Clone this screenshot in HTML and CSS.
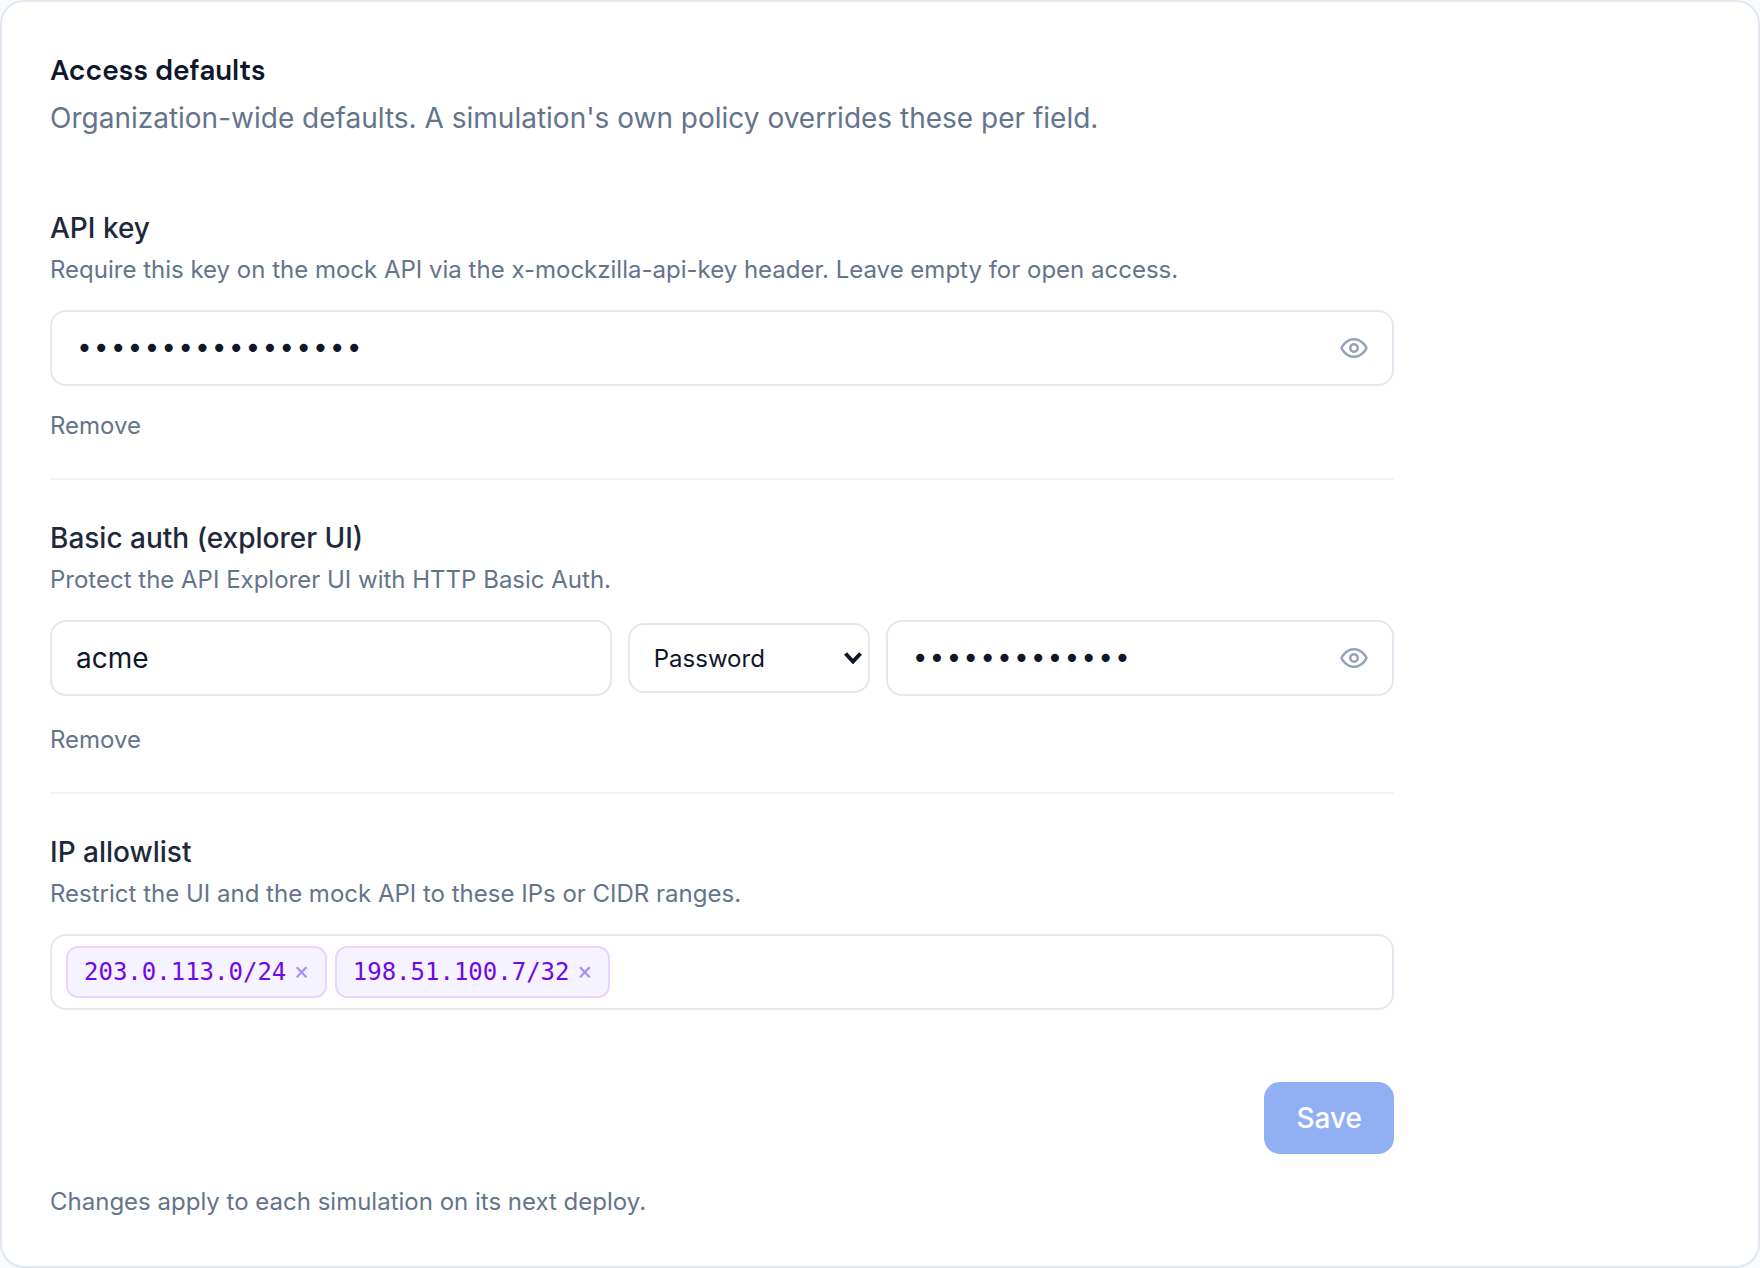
FILE: index.html
```html
<!DOCTYPE html>
<html lang="en">
<head>
    <meta charset="UTF-8">
    <meta name="viewport" content="width=device-width, initial-scale=1.0">
    <title>Access defaults</title>
    <link rel="stylesheet" href="styles.css">
</head>
<body>
    <main class="card">
        <header class="card-header">
            <h2>Access defaults</h2>
            <p>Organization-wide defaults. A simulation's own policy overrides these per field.</p>
        </header>

        <form id="accessForm" class="access-form">
            <section class="field">
                <label class="field-label" for="apiKey">API key</label>
                <p class="field-help">Require this key on the mock API via the x-mockzilla-api-key header. Leave empty for open access.</p>
                <div class="secret">
                    <input type="password" id="apiKey" name="apiKey" value="mk_live_4f9a27c1e" autocomplete="off">
                    <button type="button" class="reveal" aria-label="Show API key">
                        <svg viewBox="0 0 24 24"><path d="M2 12s3-7 10-7 10 7 10 7-3 7-10 7-10-7-10-7Z"/><circle cx="12" cy="12" r="3"/></svg>
                    </button>
                </div>
                <button type="button" class="remove">Remove</button>
            </section>

            <section class="field">
                <label class="field-label" for="authUser">Basic auth (explorer UI)</label>
                <p class="field-help">Protect the API Explorer UI with HTTP Basic Auth.</p>
                <div class="auth-row">
                    <input type="text" id="authUser" name="authUser" value="acme" autocomplete="off">
                    <select id="authType" name="authType" aria-label="Credential type">
                        <option>Password</option>
                        <option>Hash</option>
                    </select>
                    <div class="secret">
                        <input type="password" id="authPassword" name="authPassword" value="hunter2-acme!" aria-label="Password" autocomplete="off">
                        <button type="button" class="reveal" aria-label="Show password">
                            <svg viewBox="0 0 24 24"><path d="M2 12s3-7 10-7 10 7 10 7-3 7-10 7-10-7-10-7Z"/><circle cx="12" cy="12" r="3"/></svg>
                        </button>
                    </div>
                </div>
                <button type="button" class="remove">Remove</button>
            </section>

            <section class="field">
                <label class="field-label" for="allowlist">IP allowlist</label>
                <p class="field-help">Restrict the UI and the mock API to these IPs or CIDR ranges.</p>
                <div class="tag-box">
                    <span class="tag">203.0.113.0/24<button type="button" aria-label="Remove 203.0.113.0/24">&times;</button></span>
                    <span class="tag">198.51.100.7/32<button type="button" aria-label="Remove 198.51.100.7/32">&times;</button></span>
                    <input type="text" id="allowlist" name="allowlist" autocomplete="off">
                </div>
            </section>

            <div class="actions">
                <button type="submit" class="save" disabled>Save</button>
            </div>
        </form>

        <p class="note">Changes apply to each simulation on its next deploy.</p>
    </main>

    <script>
        const form = document.getElementById("accessForm");
        const saveButton = form.querySelector(".save");

        // Show or hide a secret
        document.querySelectorAll(".reveal").forEach(function(button) {
            button.addEventListener("click", function() {
                let input = button.previousElementSibling;
                input.type = input.type === "password" ? "text" : "password";
            });
        });

        // Remove an address from the allowlist
        document.querySelectorAll(".tag button").forEach(function(button) {
            button.addEventListener("click", function() {
                button.parentElement.remove();
                saveButton.disabled = false;
            });
        });

        // Clear the inputs of a section
        document.querySelectorAll(".remove").forEach(function(button) {
            button.addEventListener("click", function() {
                button.parentElement.querySelectorAll("input").forEach(function(input) {
                    input.value = "";
                });
                saveButton.disabled = false;
            });
        });

        form.addEventListener("input", function() {
            saveButton.disabled = false;
        });

        form.addEventListener("submit", function(event) {
            event.preventDefault();
            saveButton.disabled = true;
        });
    </script>
</body>
</html>
```
FILE: styles.css
```css
/* General styles */
* {
    box-sizing: border-box;
}

body {
    margin: 0;
    background: #f8fafc;
    color: #0f172a;
    font-family: Inter, sans-serif;
    font-size: 28px;
    line-height: 40px;
}

h2,
p {
    margin: 0;
}

input,
select,
button {
    margin: 0;
    font-family: inherit;
    color: inherit;
}

button {
    padding: 0;
    border: none;
    background: none;
    cursor: pointer;
}

/* Card */
.card {
    padding: 48px;
    background: #fff;
    border: 2px solid #e2e8f0;
    border-radius: 24px;
}

.card-header {
    display: flex;
    flex-direction: column;
    gap: 6px;
    margin-bottom: 70px;
}

.card-header h2 {
    font-family: "DM Sans", Inter, sans-serif;
    font-size: 28px;
    font-weight: 600;
    line-height: 42px;
}

.card-header p {
    color: #64748b;
}

/* Form sections */
.access-form {
    max-width: 1344px;
}

.field {
    display: flex;
    flex-direction: column;
    align-items: stretch;
}

.field + .field {
    margin-top: 36px;
    padding-top: 38px;
    border-top: 2px solid #f1f5f9;
}

.field-label {
    color: #1e293b;
    font-weight: 500;
}

.field-help,
.remove,
.note {
    color: #64748b;
    font-size: 24px;
    line-height: 32px;
}

.field-help {
    margin: 6px 0 24px;
}

.remove {
    align-self: flex-start;
    margin-top: 24px;
}

.auth-row + .remove {
    margin-top: 28px;
}

/* Inputs */
.secret input,
.auth-row > input {
    width: 100%;
    height: 76px;
    padding: 0 24px;
    background: #fff;
    border: 2px solid #e2e8f0;
    border-radius: 16px;
    font-size: 28px;
}

.secret {
    position: relative;
}

.secret input {
    padding-right: 80px;
    font-family: "DejaVu Sans Mono", monospace;
}

.reveal {
    position: absolute;
    top: 0;
    right: 25px;
    height: 100%;
    display: flex;
    align-items: center;
    color: #94a3b8;
}

.reveal svg {
    width: 30px;
    height: 30px;
    fill: none;
    stroke: currentColor;
    stroke-width: 2;
    stroke-linecap: round;
    stroke-linejoin: round;
}

.auth-row {
    display: grid;
    grid-template-columns: 21fr 242px 19fr;
    align-items: center;
    gap: 16px;
}

.auth-row select {
    height: 70px;
    padding: 0 24px;
    appearance: none;
    background: #fff url("data:image/svg+xml,%3Csvg xmlns='http://www.w3.org/2000/svg' viewBox='0 0 18 12'%3E%3Cpath d='M1.5 1.5 9 9.5l7.500-8' fill='none' stroke='%230f172a' stroke-width='4'/%3E%3C/svg%3E") no-repeat right 6px center / 18px 12px;
    border: 2px solid #e2e8f0;
    border-radius: 16px;
    font-size: 24px;
}

/* Allowlist tags */
.tag-box {
    display: flex;
    flex-wrap: wrap;
    align-items: center;
    gap: 8px;
    padding: 10px 14px;
    border: 2px solid #e2e8f0;
    border-radius: 16px;
}

.tag-box input {
    flex: 1;
    min-width: 160px;
    height: 40px;
    padding: 0;
    border: none;
    outline: none;
    font-size: 24px;
}

.tag {
    display: flex;
    align-items: center;
    gap: 8px;
    height: 52px;
    padding: 0 16px;
    background: #f5f3ff;
    border: 2px solid #e9d5ff;
    border-radius: 12px;
    color: #7008e7;
    font-family: "DejaVu Sans Mono", monospace;
    font-size: 24px;
}

.tag button {
    color: #a78bfa;
    font-family: inherit;
    font-size: 24px;
}

/* Footer */
.actions {
    display: flex;
    justify-content: flex-end;
    margin-top: 72px;
}

.save {
    height: 72px;
    padding: 0 32px;
    background: #2563eb;
    border-radius: 16px;
    color: #fff;
    font-size: 28px;
    font-weight: 500;
}

.save:disabled {
    opacity: 0.5;
    cursor: default;
}

.note {
    margin-top: 32px;
}
```
